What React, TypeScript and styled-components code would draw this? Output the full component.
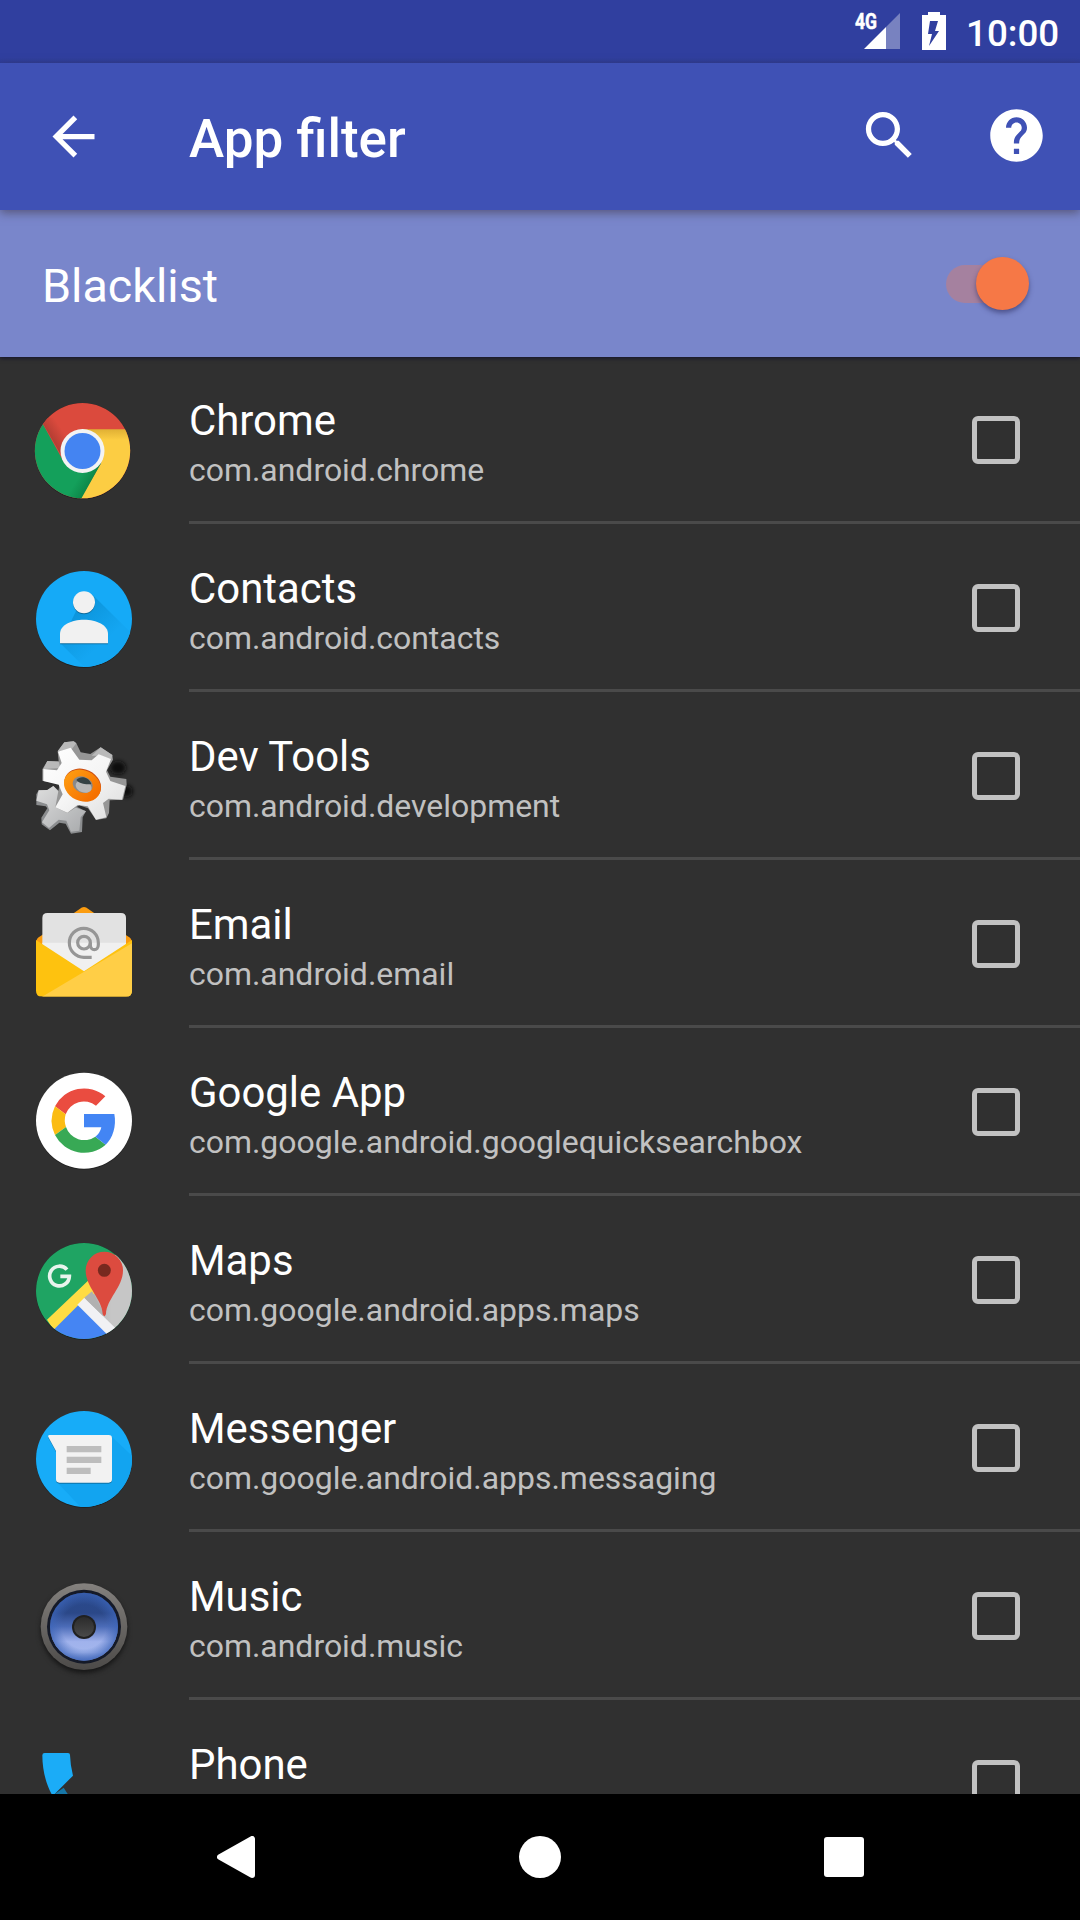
import React, { ReactNode, useState } from 'react';
import styled, { createGlobalStyle } from 'styled-components';

const GlobalStyle = createGlobalStyle`
  * {
    box-sizing: border-box;
  }

  body {
    margin: 0;
    background: #000;
    font-family: Roboto, 'Noto Sans', sans-serif;
  }

  svg {
    display: block;
    flex: none;
  }
`;

const Screen = styled.div`
  display: flex;
  flex-direction: column;
  width: 1080px;
  height: 1920px;
  overflow: hidden;
  background: #303030;
  color: #fff;
`;

const StatusBar = styled.div`
  display: flex;
  flex: none;
  height: 63px;
  padding-right: 18px;
  justify-content: flex-end;
  background: linear-gradient(#303f9f 58px, #2d3b96 63px);
`;

const Clock = styled.span`
  width: 96px;
  padding-top: 3px;
  margin-left: 20px;
  font-size: 36.75px;
  font-weight: 500;
  line-height: 61px;
  white-space: nowrap;
`;

const AppBar = styled.header`
  display: flex;
  flex: none;
  align-items: center;
  height: 147px;
  padding: 0 32px 2px 42px;
  background: #3f51b5;
  box-shadow: 0 3px 9px rgba(60, 50, 60, 0.55);
  z-index: 2;
`;

const IconButton = styled.button`
  width: 63px;
  height: 63px;
  padding: 0;
  border: 0;
  background: none;
  color: #fff;
`;

const BackButton = styled(IconButton)`
  margin-top: 2px;
`;

const Title = styled.h1`
  flex: 1;
  margin: 0 0 0 84px;
  padding-top: 7px;
  font-size: 53px;
  font-weight: 500;
  line-height: 62px;
`;

const Actions = styled.div`
  display: flex;
  gap: 64px;
`;

const FilterBar = styled.section`
  display: flex;
  flex: none;
  align-items: center;
  justify-content: space-between;
  height: 147px;
  padding: 0 51px 0 42px;
  background: #7986cb;
  box-shadow: 0 1px 4px rgba(10, 10, 40, 0.8);
  z-index: 1;
`;

const FilterLabel = styled.span`
  padding-top: 5px;
  font-size: 46.7px;
  line-height: 56px;
`;

const Switch = styled.button<{ $on: boolean }>`
  display: flex;
  align-items: center;
  justify-content: ${(p) => (p.$on ? 'flex-end' : 'flex-start')};
  width: 83px;
  height: 38px;
  padding: 0;
  border: 0;
  border-radius: 19px;
  background: ${(p) =>
    p.$on ? 'linear-gradient(90deg, #a5819f 64px, transparent 64px)' : '#9499b8'};
`;

const Thumb = styled.span`
  width: 53px;
  height: 53px;
  border-radius: 50%;
  background: #f67846;
  box-shadow: 0 3px 5px rgba(40, 40, 90, 0.55);
`;

const List = styled.ul`
  flex: 1;
  min-height: 0;
  margin: -1px 0 0;
  padding: 0;
  overflow: hidden;
  list-style: none;
`;

const Row = styled.li`
  display: flex;
  height: 168px;
  padding-left: 24px;
`;

const IconSlot = styled.div`
  width: 165px;
  padding-top: 35px;
`;

const RowBody = styled.div`
  display: flex;
  flex: 1;
  justify-content: space-between;
  padding: 40px 60px 0 0;
  border-bottom: 3px solid #4a4a4a;
`;

const AppName = styled.div`
  font-size: 41.9px;
  line-height: 50px;
`;

const PackageName = styled.div`
  margin-top: 5px;
  color: #c1c1c1;
  font-size: 31.95px;
  line-height: 38px;
`;

const Checkbox = styled.button`
  width: 48px;
  height: 48px;
  margin-top: 20px;
  padding: 0;
  border: 5.5px solid #c1c1c1;
  border-radius: 6px;
  background: none;
`;

const NavBar = styled.nav`
  display: grid;
  flex: none;
  grid-template-columns: repeat(3, 304px);
  place-content: center;
  place-items: center;
  height: 126px;
  background: #000;
  z-index: 1;
`;

// every launcher icon is drawn on a 360 unit grid, `top` is the grid's first y
const AppIcon = ({ top, children }: { top: number; children: ReactNode }) => (
  <svg width="120" height="120" viewBox={`72 ${top} 360 360`}>
    {children}
  </svg>
);

const shadow = { filter: 'drop-shadow(0 3px 2px rgba(0, 0, 0, 0.3))' };

const ChromeIcon = () => (
  <AppIcon top={93}>
    <defs>
      <clipPath id="chromeClip">
        <circle cx="247.500" cy="272" r="143" />
      </clipPath>
      <linearGradient id="chromeRed" gradientUnits="userSpaceOnUse" x1="145" y1="245" x2="190" y2="215">
        <stop offset="0" stopColor="#a83a30" />
        <stop offset="1" stopColor="#db4a3d" />
      </linearGradient>
      <linearGradient id="chromeYellow" gradientUnits="userSpaceOnUse" x1="0" y1="208" x2="0" y2="240">
        <stop offset="0" stopColor="#e0b034" />
        <stop offset="1" stopColor="#fccd43" />
      </linearGradient>
      <linearGradient id="chromeGreen" gradientUnits="userSpaceOnUse" x1="277" y1="368" x2="240" y2="345">
        <stop offset="0" stopColor="#0c8547" />
        <stop offset="1" stopColor="#14a05b" />
      </linearGradient>
    </defs>
    <circle cx="247.500" cy="272" r="143" fill="#222" style={shadow} />
    <g clipPath="url(#chromeClip)">
      <rect x="100" y="120" width="300" height="300" fill="#db4a3d" />
      <path d="M120 177L128 190L185 288L218 250L175 170Z" fill="url(#chromeRed)" />
      <path d="M247 208H410V430H233L304 308Z" fill="url(#chromeYellow)" />
      <path d="M120 177L191 305L247 335L304 308L236 430H90V200Z" fill="url(#chromeGreen)" />
    </g>
    <circle cx="247.500" cy="273" r="66" fill="#f3f3f3" />
    <circle cx="247.500" cy="273" r="54" fill="#4484f2" />
  </AppIcon>
);

const ContactsIcon = () => (
  <AppIcon top={57}>
    <defs>
      <clipPath id="contactsClip">
        <circle cx="252" cy="237" r="144" />
      </clipPath>
      <linearGradient id="contactsShade" gradientUnits="userSpaceOnUse" x1="250" y1="200" x2="330" y2="290">
        <stop offset="0" stopColor="#0c95dc" />
        <stop offset="1" stopColor="#14a6f2" />
      </linearGradient>
    </defs>
    <circle cx="252" cy="237" r="144" fill="#15aaf7" style={shadow} />
    <path
      clipPath="url(#contactsClip)"
      d="M276 163L400 285V400H272L181 310L230 209Z"
      fill="url(#contactsShade)"
    />
    <circle cx="252" cy="187" r="33" fill="#f1f1f1" style={shadow} />
    <path
      d="M180 310V281C180 255 214 239 252 239S324 255 324 281V310Z"
      fill="#f1f1f1"
      style={shadow}
    />
  </AppIcon>
);

const DevToolsIcon = () => (
  <AppIcon top={51}>
    <defs>
      <linearGradient id="gearFace" x1="0" y1="0" x2="1" y2="1">
        <stop offset="0" stopColor="#fff" />
        <stop offset="0.5" stopColor="#f5f5f5" />
        <stop offset="1" stopColor="#dcdcdc" />
      </linearGradient>
      <linearGradient id="gearBack" x1="0" y1="0" x2="1" y2="1">
        <stop offset="0" stopColor="#dedede" />
        <stop offset="1" stopColor="#a8aaac" />
      </linearGradient>
      <linearGradient id="gearRing" x1="0" y1="0" x2="1" y2="0.3">
        <stop offset="0" stopColor="#ffa013" />
        <stop offset="1" stopColor="#f57000" />
      </linearGradient>
      <filter id="gearBlur" x="-50%" y="-50%" width="200%" height="200%">
        <feGaussianBlur stdDeviation="7" />
      </filter>
    </defs>
    <g fill="#0e0e0e" filter="url(#gearBlur)">
      <ellipse cx="354" cy="173" rx="24" ry="20" />
      <ellipse cx="380" cy="244" rx="18" ry="18" />
    </g>
    <path
      d="M116 241L142 240L160 228L230 290L258 304L248 322L246 366L213 371L197 341L178 338L150 361L125 343L124 323L142 295L137 289L109 285V253Z"
      fill="#8b8d8f"
    />
    <path
      d="M116 241L142 240L160 228L220 290L258 304L242 322L238 362L213 365L199 332L176 329L147 354L126 337L148 301L141 283L109 272Z"
      fill="url(#gearBack)"
    />
    <path
      d="M173 124L193 97L221 94L229 100L242 127L271 132L302 112L337 135L339 149L321 181L331 200L379 207L380 224L369 269L329 271L327 309L319 325L288 330L264 295L238 286L202 309L166 292L179 222L127 212V178L142 153L176 154Z"
      fill="#969696"
    />
    <path d="M173 124L193 97L221 94L229 100L215 118L184 126ZM275 137L302 112L337 135L334 148L304 137ZM130 177L142 153L176 155L181 174Z" fill="#b9b9b9" />
    <path
      d="M174 125L212 113L238 149L275 151L296 133L333 147L318 185L331 213L376 228L366 269L326 266L309 279L319 322L288 329L263 289L233 285L202 308L166 292L188 253L176 224L130 213V177L171 181L185 159Z"
      fill="url(#gearFace)"
    />
    <ellipse cx="248" cy="224" rx="57" ry="46" transform="rotate(25 248 224)" fill="#c94b12" />
    <ellipse cx="247" cy="227" rx="57" ry="46" transform="rotate(25 247 227)" fill="url(#gearRing)" />
    <ellipse cx="248" cy="224" rx="31" ry="24" transform="rotate(20 248 224)" fill="#898989" />
    <ellipse cx="251" cy="230" rx="25" ry="17" transform="rotate(20 251 230)" fill="#b8b8b8" />
    <path d="M229 210C243 194 268 203 274 222C259 224 239 222 229 210Z" fill="#354244" />
  </AppIcon>
);

const EmailIcon = () => (
  <AppIcon top={45}>
    <defs>
      <clipPath id="mailClip">
        <path d="M108 180L252 274L396 180V332Q396 350 378 350H126Q108 350 108 332Z" />
      </clipPath>
    </defs>
    <g style={shadow}>
      <path
        d="M108 190Q108 174 122 168L239 87Q252 75 265 87L382 168Q396 174 396 190L252 280Z"
        fill="#fb9c10"
      />
      <path d="M127 114Q127 99 142 99H363Q378 99 378 114V205L252 280L127 205Z" fill="#e2e2e2" />
      <path d="M127 188H378V205L252 280L127 205Z" fill="#f0f0f0" />
    </g>
    <g clipPath="url(#mailClip)">
      <rect x="108" y="170" width="288" height="180" fill="#fec20f" />
      <path d="M396 190L120 354H400Z" fill="#ffce46" />
    </g>
    <g fill="none" stroke="#969696" strokeWidth="9.500">
      <circle cx="252" cy="188" r="19" />
      <path d="M275 232H252A43.500 43.500 0 1 1 295 188V194C295 214 271 214 271 194V188" />
    </g>
  </AppIcon>
);

const GoogleIcon = () => (
  <AppIcon top={39}>
    <circle cx="252" cy="212" r="144" fill="#fff" style={shadow} />
    <path d="M316 139A98 98 0 0 0 165 169L197 193A58 58 0 0 1 288 167Z" fill="#ea4c40" />
    <path d="M165 169A98 98 0 0 0 165 255L198 231A60 60 0 0 1 197 193Z" fill="#fbbc12" />
    <path d="M165 255A98 98 0 0 0 317 284L286 260A58 58 0 0 1 198 231Z" fill="#38a955" />
    <path d="M252 192H343C350 229 338 265 317 284L286 260Q300 250 304 232H252Z" fill="#4385f4" />
  </AppIcon>
);

const MapsIcon = () => (
  <AppIcon top={48}>
    <defs>
      <clipPath id="mapsClip">
        <circle cx="252" cy="228" r="144" />
      </clipPath>
      <linearGradient id="mapsGrey" x1="0" y1="0" x2="1" y2="0">
        <stop offset="0" stopColor="#aaa" />
        <stop offset="0.6" stopColor="#c6c6c6" />
      </linearGradient>
    </defs>
    <circle cx="252" cy="228" r="144" fill="#222" style={shadow} />
    <g clipPath="url(#mapsClip)">
      <rect x="100" y="80" width="300" height="300" fill="#1fa463" />
      <path d="M236 269L300 180L350 115L400 160V380H340Z" fill="url(#mapsGrey)" />
      <path d="M232 268L130 370V390H360Z" fill="#4585f3" />
      <path d="M141 314L264 197L290 232L236 269L161 344Z" fill="#ffdc44" />
      <path d="M232 269L253 248L352 345L327 364Z" fill="#f1f1f4" />
      <path d="M253 248L276 229L310 290V304Z" fill="#b1b1b1" />
    </g>
    <path
      d="M201 164A29.500 29.500 0 1 0 208 184H181"
      fill="none"
      stroke="#e8f4ed"
      strokeWidth="11"
    />
    <path
      d="M308 297C307 253 257 217 257 166A56 56 0 0 1 369 166C369 217 319 253 318 297Q313 310 308 297Z"
      fill="#dc4b3f"
    />
    <circle cx="313" cy="166" r="19.500" fill="#78291f" />
  </AppIcon>
);

const MessengerIcon = () => (
  <AppIcon top={27}>
    <defs>
      <clipPath id="messengerClip">
        <circle cx="252" cy="207" r="144" />
      </clipPath>
    </defs>
    <circle cx="252" cy="207" r="144" fill="#17acf8" style={shadow} />
    <path clipPath="url(#messengerClip)" d="M333 138L420 220V360H250L170 275Z" fill="#12a4f0" />
    <path
      d="M149 135H326Q336 135 336 145V268Q336 278 326 278H178Q168 278 168 268V183L145 141Q143 135 149 135Z"
      fill="#f2f2f2"
      style={shadow}
    />
    <path d="M200 168H304V187H200ZM200 200H304V219H200ZM200 233H272V252H200Z" fill="#bdbdbd" />
  </AppIcon>
);

const MusicIcon = () => (
  <AppIcon top={21}>
    <defs>
      <linearGradient id="speakerRim" x1="0" y1="0" x2="0" y2="1">
        <stop offset="0" stopColor="#84817e" />
        <stop offset="1" stopColor="#4c4a48" />
      </linearGradient>
      <linearGradient id="speakerCone" x1="0" y1="0" x2="0" y2="1">
        <stop offset="0" stopColor="#29498d" />
        <stop offset="0.3" stopColor="#2b4888" />
        <stop offset="0.5" stopColor="#4c6cb8" />
        <stop offset="0.72" stopColor="#a0b2ec" />
        <stop offset="0.88" stopColor="#a3b6ed" />
        <stop offset="1" stopColor="#708ad0" />
      </linearGradient>
      <radialGradient id="speakerSide">
        <stop offset="0.65" stopColor="#3f66b8" stopOpacity="0" />
        <stop offset="1" stopColor="#3c65b9" stopOpacity="0.75" />
      </radialGradient>
      <linearGradient id="speakerCap" x1="0" y1="0" x2="0" y2="1">
        <stop offset="0" stopColor="#2b2b2b" />
        <stop offset="1" stopColor="#494949" />
      </linearGradient>
    </defs>
    <circle cx="252" cy="200" r="130" fill="url(#speakerRim)" style={{ filter: 'drop-shadow(0 9px 8px #151515)' }} />
    <circle cx="252" cy="200" r="111" fill="#151a28" />
    <circle cx="252" cy="200" r="102" fill="url(#speakerCone)" />
    <circle cx="252" cy="200" r="102" fill="url(#speakerSide)" />
    <circle cx="252" cy="201" r="36" fill="#202020" />
    <circle cx="252" cy="201" r="30" fill="url(#speakerCap)" />
  </AppIcon>
);

const PhoneIcon = () => (
  <AppIcon top={525}>
    <path d="M160 705L191 683L240 760L200 800Z" fill="#1777a8" />
    <path d="M134 579H204Q210 579 210 585Q211 616 219 647L158 708C138 674 127 630 127 586Q127 579 134 579Z" fill="#1bacf7" />
  </AppIcon>
);

const apps = [
  { name: 'Chrome', pkg: 'com.android.chrome', icon: <ChromeIcon /> },
  { name: 'Contacts', pkg: 'com.android.contacts', icon: <ContactsIcon /> },
  { name: 'Dev Tools', pkg: 'com.android.development', icon: <DevToolsIcon /> },
  { name: 'Email', pkg: 'com.android.email', icon: <EmailIcon /> },
  { name: 'Google App', pkg: 'com.google.android.googlequicksearchbox', icon: <GoogleIcon /> },
  { name: 'Maps', pkg: 'com.google.android.apps.maps', icon: <MapsIcon /> },
  { name: 'Messenger', pkg: 'com.google.android.apps.messaging', icon: <MessengerIcon /> },
  { name: 'Music', pkg: 'com.android.music', icon: <MusicIcon /> },
  { name: 'Phone', pkg: '', icon: <PhoneIcon /> },
];

const App = () => {
  const [blacklist, setBlacklist] = useState<boolean>(true);

  return (
    <Screen>
      <GlobalStyle />
      <StatusBar>
        <svg width="96" height="63" viewBox="850 0 96 63" fill="#fff">
          <text
            x="855"
            y="29"
            fontSize="22"
            fontWeight="700"
            textLength="22"
            lengthAdjust="spacingAndGlyphs"
            stroke="#fff"
            strokeWidth="0.5"
          >
            4G
          </text>
          <path d="M864 49L886 27V49Z" />
          <path d="M886 27L900 13V49H886Z" opacity="0.35" />
          <path
            fillRule="evenodd"
            d="M928 12H940V15H946V50H922V15H928ZM930 21L928 34H932L929 46L939 31H935L938 21Z"
          />
        </svg>
        <Clock>10:00</Clock>
      </StatusBar>

      <AppBar>
        <BackButton aria-label="Back">
          <svg width="63" height="63" viewBox="0 0 24 24" fill="currentColor">
            <path d="M20 11H7.830l5.590-5.590L12 4l-8 8 8 8 1.410-1.410L7.830 13H20v-2z" />
          </svg>
        </BackButton>
        <Title>App filter</Title>
        <Actions>
          <IconButton aria-label="Search">
            <svg width="63" height="63" viewBox="0 0 24 24" fill="currentColor">
              <path d="M15.500 14h-.790l-.280-.270C15.410 12.590 16 11.110 16 9.500 16 5.910 13.090 3 9.500 3S3 5.910 3 9.500 5.910 16 9.500 16c1.610 0 3.090-.590 4.230-1.570l.270.280v.790l5 4.990L20.490 19l-4.990-5zm-6 0C7.010 14 5 11.990 5 9.500S7.010 5 9.500 5 14 7.010 14 9.500 11.990 14 9.500 14z" />
            </svg>
          </IconButton>
          <IconButton aria-label="Help">
            <svg width="63" height="63" viewBox="0 0 24 24" fill="currentColor">
              <path d="M12 2C6.480 2 2 6.480 2 12s4.480 10 10 10 10-4.480 10-10S17.520 2 12 2zm1 17h-2v-2h2v2zm2.070-7.750l-.900.920C13.450 12.900 13 13.500 13 15h-2v-.500c0-1.100.450-2.100 1.170-2.830l1.240-1.260c.370-.360.590-.860.590-1.410 0-1.100-.900-2-2-2s-2 .900-2 2H8c0-2.210 1.790-4 4-4s4 1.790 4 4c0 .880-.360 1.680-.930 2.250z" />
            </svg>
          </IconButton>
        </Actions>
      </AppBar>

      <FilterBar>
        <FilterLabel>Blacklist</FilterLabel>
        <Switch $on={blacklist} aria-label="Blacklist" onClick={() => setBlacklist(!blacklist)}>
          <Thumb />
        </Switch>
      </FilterBar>

      <List>
        {apps.map((app) => (
          <Row key={app.name}>
            <IconSlot>{app.icon}</IconSlot>
            <RowBody>
              <div>
                <AppName>{app.name}</AppName>
                <PackageName>{app.pkg}</PackageName>
              </div>
              <Checkbox aria-label={app.name} />
            </RowBody>
          </Row>
        ))}
      </List>

      <NavBar>
        <svg width="38" height="42" viewBox="0 0 38 42">
          <path d="M3 21L35 3V39Z" fill="#fff" stroke="#fff" strokeWidth="6" strokeLinejoin="round" />
        </svg>
        <svg width="42" height="42" viewBox="0 0 42 42">
          <circle cx="21" cy="21" r="21" fill="#fff" />
        </svg>
        <svg width="40" height="40" viewBox="0 0 40 40">
          <rect width="40" height="40" rx="3" fill="#fff" />
        </svg>
      </NavBar>
    </Screen>
  );
};

export default App;
